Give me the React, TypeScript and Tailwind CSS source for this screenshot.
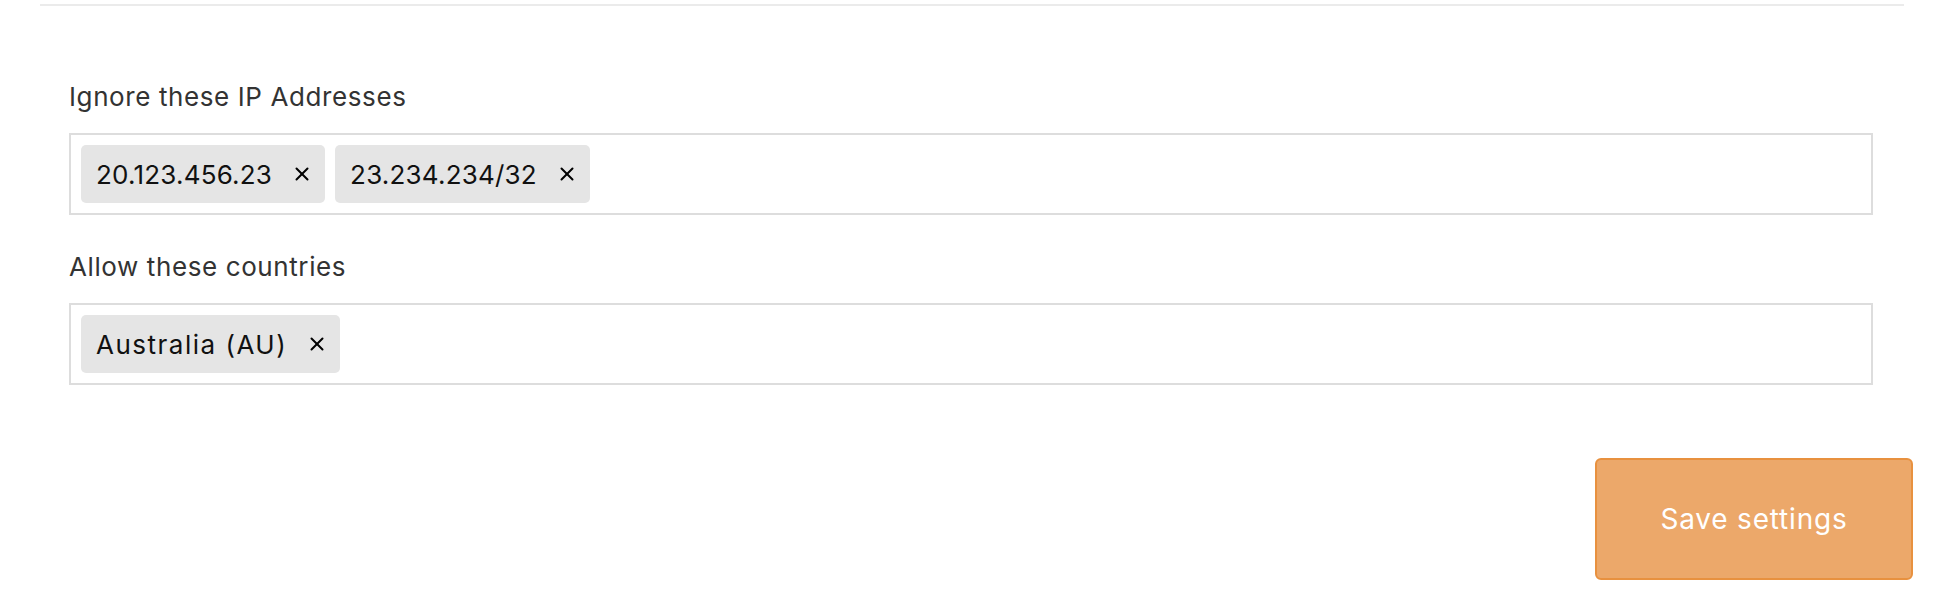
import { X } from 'lucide-react'

type Field = { label: string; values: string[]; wide?: boolean }

const fields: Field[] = [
  { label: 'Ignore these IP Addresses', values: ['20.123.456.23', '23.234.234/32'] },
  { label: 'Allow these countries', values: ['Australia (AU)'], wide: true },
]

function Chip({ text, wide }: { text: string; wide?: boolean }) {
  return (
    <span
      className={
        wide
          ? 'flex h-[58px] items-center gap-[19px] rounded-[5px] bg-[#e5e5e5] pl-[15px] pr-[12px] text-[26px] tracking-[1.5px] text-[#111]'
          : 'flex h-[58px] items-center gap-[19px] rounded-[5px] bg-[#e5e5e5] pl-[15px] pr-[12px] text-[26px] tracking-[0.2px] text-[#111]'
      }
    >
      {text}
      <X size={22} strokeWidth={2.2} className="text-black" />
    </span>
  )
}

export default function App() {
  return (
    <div className="min-h-[612px] bg-white pl-[40px] pr-[29px] pt-[4px] font-['Inter',sans-serif]">
      <div className="mr-[9px] border-t-2 border-[#ebebeb]" />

      <div className="flex flex-col gap-[32px] pl-[29px] pr-[40px] pt-[71px]">
        {fields.map((f, i) => (
          <div key={i}>
            <label className="block text-[26px] leading-[40px] tracking-[0.6px] text-[#333]">{f.label}</label>
            <div className="mt-[16px] flex h-[82px] items-center gap-[10px] border-2 border-[#dddddd] px-[10px]">
              {f.values.map(v => (
                <Chip key={v} text={v} wide={f.wide} />
              ))}
            </div>
          </div>
        ))}
      </div>

      <div className="mt-[73px] flex justify-end">
        <button className="h-[122px] w-[318px] rounded-[6px] border-2 border-[#e8913f] bg-[#eca86a] text-[28px] tracking-[0.8px] text-white">
          Save settings
        </button>
      </div>
    </div>
  )
}
